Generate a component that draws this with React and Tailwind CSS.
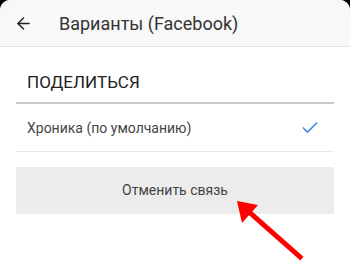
import { ArrowLeft, Check } from "lucide-react"

export default function App() {
    return (
        <div className="h-[276px] w-[350px] overflow-hidden bg-black font-['Roboto',sans-serif]">
            <div className="relative h-full rounded-t-[10px] bg-white">
                <header className="flex h-[47px] items-center rounded-t-[10px] border-b border-[#e2e2e2] bg-[#f8f8f8]">
                    <ArrowLeft className="ml-[14px] h-[19px] w-[19px] text-[#222]" strokeWidth={1.8} />
                    <h1 className="ml-[26px] text-[18px] text-[#333]">Варианты (Facebook)</h1>
                </header>

                <div className="px-4">
                    <div className="border-b-2 border-[#c9c9c9] pb-[9px] pl-[11px] pt-[24px]">
                        <p className="text-[17px] leading-[22px] text-[#222]">ПОДЕЛИТЬСЯ</p>
                    </div>
                    <div className="flex h-[48px] items-center justify-between border-b border-[#e9e9e9] pl-[11px] pr-[14px]">
                        <span className="pt-[2px] text-[14px] text-[#444]">Хроника (по умолчанию)</span>
                        <Check className="h-[20px] w-[20px] text-[#4a8fe0]" strokeWidth={2} />
                    </div>
                    <button
                        type="button"
                        className="mt-[15px] flex h-[47px] w-full items-center justify-center bg-[#ececec] text-[14px] text-[#444]"
                    >
                        Отменить связь
                    </button>
                </div>

                <svg className="absolute left-0 top-0" width="350" height="276" viewBox="0 0 350 276">
                    <line x1="300" y1="257" x2="248" y2="211" stroke="#ff0000" strokeWidth="5" strokeLinecap="square" />
                    <polygon points="237,201 258,205 242,223" fill="#ff0000" />
                </svg>
            </div>
        </div>
    )
}
